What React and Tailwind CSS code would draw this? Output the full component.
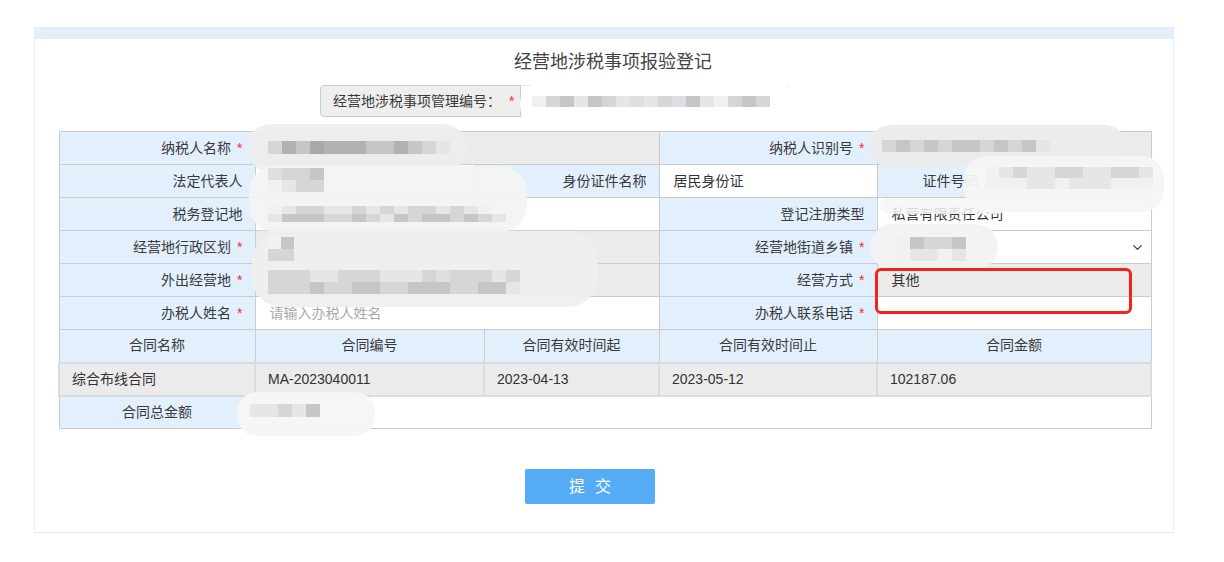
import React from 'react';
import { ChevronDown } from 'lucide-react';

const font = "font-['Liberation_Sans','Noto_Sans_CJK_SC',sans-serif]";

const label = "border border-[#cccccc] bg-[#e2f0fd] text-right pr-[12px] text-[14px] text-[#3a3a3a] h-[33px] p-0 whitespace-nowrap";
const labelC = "border border-[#cccccc] bg-[#e2f0fd] text-center text-[14px] text-[#3a3a3a] h-[33px] p-0 whitespace-nowrap";
const valW = "border border-[#cccccc] bg-white text-left pl-[14px] text-[14px] text-[#333] h-[33px] p-0";
const valG = "border border-[#cccccc] bg-[#ebebeb] text-left pl-[14px] text-[14px] text-[#333] h-[33px] p-0";
const dataC = "border-2 border-[#dcdcdc] bg-[#ebebeb] text-left pl-[12px] text-[14px] text-[#333] h-[33px] p-0";

function Req({ children }) {
    return (
        <>
            {children}<span className="ml-[6px] text-[#ff1f1f]">*</span>
        </>
    );
}

const shades = {
    a: 'bg-[#e6e6e6]',
    b: 'bg-[#d6d6d6]',
    c: 'bg-[#c6c6c6]',
    d: 'bg-[#b4b2b0]',
    e: 'bg-[#a9a9a9]',
    f: 'bg-[#f1f1f1]',
    g: 'bg-[#dedfe3]',
};

// pixelated smear
function Pixels({ rows, cls, cell }) {
    return (
        <div className={`absolute flex flex-col ${cls}`}>
            {rows.map((r, i) => (
                <div key={i} className="flex">
                    {r.split('').map((k, j) => (
                        <div key={j} className={`${cell} ${shades[k]}`} />
                    ))}
                </div>
            ))}
        </div>
    );
}

const blobs = [
    { box: 'left-[520px] top-[82px] w-[278px] h-[46px] bg-white/95 rounded-[22px]' },
    { box: 'left-[247px] top-[124px] w-[220px] h-[48px] bg-[#ededed]/95 rounded-[24px]' },
    { box: 'left-[249px] top-[166px] w-[278px] h-[66px] bg-[#f3f3f3]/95 rounded-[26px]' },
    { box: 'left-[252px] top-[231px] w-[346px] h-[76px] bg-[#efefef]/95 rounded-[30px]' },
    { box: 'left-[870px] top-[125px] w-[255px] h-[42px] bg-[#ececec]/95 rounded-[20px]' },
    { box: 'left-[964px] top-[156px] w-[200px] h-[56px] bg-[#f6f6f6]/95 rounded-[22px]' },
    { box: 'left-[880px] top-[198px] w-[126px] h-[16px] bg-[#f6f6f6]/85 rounded-[8px]' },
    { box: 'left-[870px] top-[224px] w-[128px] h-[46px] bg-[#f2f2f2]/95 rounded-[23px]' },
    { box: 'left-[237px] top-[392px] w-[138px] h-[44px] bg-[#f6f6f6]/95 rounded-[20px]' },
];

const pixels = [
    { cls: 'left-[532px] top-[96px]', cell: 'w-[14px] h-[11px]', rows: ['fbcacbagabgcafbcb'] },
    { cls: 'left-[268px] top-[141px]', cell: 'w-[14px] h-[13px]', rows: ['bdcedddccdcba'] },
    { cls: 'left-[268px] top-[168px]', cell: 'w-[14px] h-[12px]', rows: ['gbbc', 'fabb'] },
    { cls: 'left-[268px] top-[206px]', cell: 'w-[14px] h-[8px]', rows: ['fabbaabababbabaf', 'acccbbcbacbccbcba'] },
    { cls: 'left-[268px] top-[237px]', cell: 'w-[13px] h-[12px]', rows: ['fc', 'bb'] },
    { cls: 'left-[268px] top-[270px]', cell: 'w-[14px] h-[12px]', rows: ['bbbaabbbaaabgbbbab', 'bbbcbbccbbcccbbcca'] },
    { cls: 'left-[882px] top-[140px]', cell: 'w-[14px] h-[12px]', rows: ['bcbcbccbcbca'] },
    { cls: 'left-[985px] top-[167px]', cell: 'w-[14px] h-[11px]', rows: ['fabaabbaabba', 'fffaafaaafff'] },
    { cls: 'left-[896px] top-[237px]', cell: 'w-[14px] h-[12px]', rows: ['fcbbc', 'faafa'] },
    { cls: 'left-[250px] top-[404px]', cell: 'w-[14px] h-[13px]', rows: ['aabac'] },
];

export default function App() {
    return (
        <div className={`relative w-[1224px] min-h-[562px] bg-white pt-[27px] ${font}`}>
            <div className="mx-[34px] w-[1140px] border border-[#e4eef9] border-t-0">
                <div className="h-[12px] bg-[#e2effc]" />
                <h2 className="pt-[12px] pl-[18px] text-center text-[18px] leading-[22px] text-[#444]">经营地涉税事项报验登记</h2>
                <div className="mt-[12px] flex ml-[285px] h-[32px]">
                    <div className="flex items-center rounded-l-[4px] border border-[#cccccc] bg-[#eeeeee] pl-[12px] pr-[6px] text-[14px] text-[#3a3a3a]">
                        经营地涉税事项管理编号：<span className="ml-[8px] text-[#ff1f1f]">*</span>
                    </div>
                    <div className="w-[270px] border border-l-0 border-[#e6e6e6] rounded-r-[4px] bg-white" />
                </div>

                <table className="mt-[14px] ml-[23px] w-[1092px] table-fixed border-collapse border border-[#cccccc]">
                    <colgroup>
                        <col className="w-[196px]" />
                        <col className="w-[220px]" />
                        <col className="w-[9px]" />
                        <col className="w-[175px]" />
                        <col className="w-[218px]" />
                        <col className="w-[114px]" />
                        <col className="w-[160px]" />
                    </colgroup>
                    <tbody>
                        <tr>
                            <td className={label}><Req>纳税人名称</Req></td>
                            <td className={valG} colSpan={3}></td>
                            <td className={label}><Req>纳税人识别号</Req></td>
                            <td className={valG} colSpan={2}></td>
                        </tr>
                        <tr>
                            <td className={label}>法定代表人</td>
                            <td className={valW}></td>
                            <td className={label} colSpan={2}>身份证件名称</td>
                            <td className={valW}>居民身份证</td>
                            <td className={label}>证件号码</td>
                            <td className={valW}></td>
                        </tr>
                        <tr>
                            <td className={label}>税务登记地</td>
                            <td className={valW} colSpan={3}></td>
                            <td className={label}>登记注册类型</td>
                            <td className={valW} colSpan={2}>私营有限责任公司</td>
                        </tr>
                        <tr>
                            <td className={label}><Req>经营地行政区划</Req></td>
                            <td className={valG} colSpan={3}></td>
                            <td className={label}><Req>经营地街道乡镇</Req></td>
                            <td className={valW} colSpan={2}>
                                <div className="flex items-center justify-end pr-[6px]">
                                    <ChevronDown size={15} strokeWidth={2.2} className="text-[#444]" />
                                </div>
                            </td>
                        </tr>
                        <tr>
                            <td className={label}><Req>外出经营地</Req></td>
                            <td className={valG} colSpan={3}></td>
                            <td className={label}><Req>经营方式</Req></td>
                            <td className={valG} colSpan={2}>其他</td>
                        </tr>
                        <tr>
                            <td className={label}><Req>办税人姓名</Req></td>
                            <td className={`${valW} text-[#a9a9a9]`} colSpan={3}>请输入办税人姓名</td>
                            <td className={label}><Req>办税人联系电话</Req></td>
                            <td className={valW} colSpan={2}></td>
                        </tr>
                        <tr>
                            <td className={labelC}>合同名称</td>
                            <td className={labelC} colSpan={2}>合同编号</td>
                            <td className={labelC}>合同有效时间起</td>
                            <td className={labelC}>合同有效时间止</td>
                            <td className={labelC} colSpan={2}>合同金额</td>
                        </tr>
                        <tr>
                            <td className={dataC}>综合布线合同</td>
                            <td className={dataC} colSpan={2}>MA-2023040011</td>
                            <td className={dataC}>2023-04-13</td>
                            <td className={dataC}>2023-05-12</td>
                            <td className={dataC} colSpan={2}>102187.06</td>
                        </tr>
                        <tr>
                            <td className={labelC}>合同总金额</td>
                            <td className={valW} colSpan={6}></td>
                        </tr>
                    </tbody>
                </table>

                <div className="flex justify-center pt-[40px] pb-[28px] pr-[28px]">
                    <button className="h-[35px] w-[130px] rounded-[2px] bg-[#55acf4] text-[16px] tracking-[10px] pl-[10px] text-white">提交</button>
                </div>
            </div>

            {blobs.map((b, i) => (
                <div key={i} className={`absolute ${b.box}`} />
            ))}
            {pixels.map((p, i) => (
                <Pixels key={i} {...p} />
            ))}

            {/* annotation */}
            <div className="absolute left-[875px] top-[268px] w-[257px] h-[46px] rounded-[6px] border-[3px] border-[#f2231b]" />
        </div>
    );
}
